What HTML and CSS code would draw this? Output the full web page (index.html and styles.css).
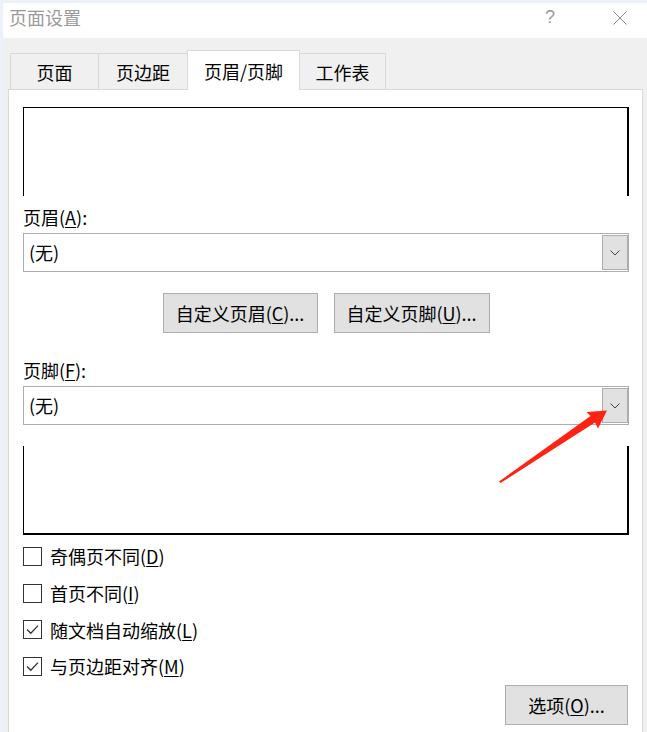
FILE: index.html
```html
<!DOCTYPE html>
<html lang="zh-CN">
<head>
<meta charset="utf-8">
<title>页面设置</title>
<link rel="stylesheet" href="styles.css">
</head>
<body>
<div class="window">
  <div class="titlebar">
    <span class="title">页面设置</span>
    <span class="help">?</span>
    <span class="close">
      <svg width="14" height="14" viewBox="0 0 14 14"><path d="M0.5 0.5L13.5 13.5M13.5 0.5L0.5 13.5" stroke="#8a8a8a" stroke-width="1" fill="none"/></svg>
    </span>
  </div>
  <div class="tabs">
    <div class="tab t1">页面</div>
    <div class="tab t2">页边距</div>
    <div class="tab t3 active">页眉/页脚</div>
    <div class="tab t4">工作表</div>
  </div>
  <div class="panel">
    <div class="preview preview-top"></div>
    <div class="label">页眉(<u>A</u>):</div>
    <div class="combo">
      <span class="combo-text">(无)</span>
      <span class="combo-btn"><svg width="10" height="6" viewBox="0 0 10 6"><path d="M0.5 0.5L5 5L9.5 0.5" stroke="#444" stroke-width="1" fill="none"/></svg></span>
    </div>
    <div class="btn-row">
      <div class="btn b1">自定义页眉(<u>C</u>)...</div>
      <div class="btn b2">自定义页脚(<u>U</u>)...</div>
    </div>
    <div class="label label2">页脚(<u>F</u>):</div>
    <div class="combo">
      <span class="combo-text">(无)</span>
      <span class="combo-btn"><svg width="10" height="6" viewBox="0 0 10 6"><path d="M0.5 0.5L5 5L9.5 0.5" stroke="#444" stroke-width="1" fill="none"/></svg></span>
    </div>
    <div class="preview preview-bottom"></div>
    <div class="checks">
      <div class="check"><span class="box"></span><span>奇偶页不同(<u>D</u>)</span></div>
      <div class="check"><span class="box"></span><span>首页不同(<u>I</u>)</span></div>
      <div class="check"><span class="box"><svg width="17" height="17" viewBox="0 0 17 17"><path d="M3 8.5L6.8 12.2L14 4.6" stroke="#333" stroke-width="1.3" fill="none"/></svg></span><span>随文档自动缩放(<u>L</u>)</span></div>
      <div class="check"><span class="box"><svg width="17" height="17" viewBox="0 0 17 17"><path d="M3 8.5L6.8 12.2L14 4.6" stroke="#333" stroke-width="1.3" fill="none"/></svg></span><span>与页边距对齐(<u>M</u>)</span></div>
    </div>
    <div class="opt-row">
      <div class="btn opt">选项(<u>O</u>)...</div>
    </div>
  </div>
</div>
<svg class="arrow" width="647" height="732" viewBox="0 0 647 732">
  <polygon points="499,481.5 590.5,416 586.5,412 607,410.5 598,428.5 595,422.5 500.5,483" fill="#ff2313"/>
</svg>
</body>
</html>
```
FILE: styles.css
```css
html, body {
  margin: 0;
  padding: 0;
}
body {
  background: #edf2f9;
  width: 647px;
  height: 732px;
  overflow: hidden;
  position: relative;
  font-family: "Noto Sans CJK SC", "Noto Sans", sans-serif;
  font-size: 18px;
  color: #000;
}
u {
  text-decoration: underline;
  text-underline-offset: 2px;
}
.window {
  margin: 3px 0 0 3px;
  width: 644px;
  height: 729px;
  background: #f0f0f0;
  overflow: hidden;
}
.titlebar {
  height: 35px;
  background: #fff;
  display: flex;
  align-items: flex-start;
  box-sizing: border-box;
  padding-top: 2px;
}
.title {
  padding-left: 6px;
  line-height: 24px;
  color: #9a9a9a;
}
.help {
  margin-left: auto;
  width: 46px;
  text-align: center;
  line-height: 24px;
  color: #9a9a9a;
  font-family: "Liberation Sans", sans-serif;
  font-size: 18px;
  margin-right: 24px;
}
.close {
  width: 46px;
  margin-right: 4px;
  display: flex;
  justify-content: center;
  padding-top: 6px;
}
.tabs {
  display: flex;
  align-items: flex-end;
  padding-left: 7px;
  height: 51px;
  box-sizing: border-box;
  position: relative;
  z-index: 1;
}
.tab {
  box-sizing: border-box;
  height: 36px;
  border: 1px solid #d9d9d9;
  border-bottom: none;
  margin-left: -1px;
  display: flex;
  align-items: center;
  justify-content: center;
  padding-top: 1px;
}
.t1 { width: 89px; margin-left: 0; }
.t2 { width: 90px; }
.t3 { width: 113px; }
.t4 { width: 87px; }
.tab.active {
  height: 40px;
  background: #fff;
  margin-bottom: -1px;
  position: relative;
  z-index: 2;
  padding-top: 0;
}
.panel {
  margin-left: 5px;
  width: 635px;
  height: 700px;
  box-sizing: border-box;
  background: #fff;
  border: 1px solid #d9d9d9;
  padding: 17px 13px 0 14px;
}
.preview {
  height: 89px;
  box-sizing: border-box;
}
.preview-top {
  border-top: 1px solid #000;
  border-left: 1px solid #000;
  border-right: 2px solid #000;
}
.preview-bottom {
  margin-top: 21px;
  border-left: 1px solid #000;
  border-right: 2px solid #000;
  border-bottom: 2px solid #000;
}
.label {
  margin-top: 9px;
  line-height: 24px;
  height: 24px;
}
.label2 {
  margin-top: 25px;
}
.combo {
  margin-top: 4px;
  height: 39px;
  box-sizing: border-box;
  border: 1px solid #adadad;
  display: flex;
  align-items: stretch;
}
.combo-text {
  flex: 1;
  padding-left: 5px;
  line-height: 37px;
}
.combo-btn {
  width: 26px;
  margin: 1px 0 1px 0;
  box-sizing: border-box;
  border: 1px solid #adadad;
  background: #e1e1e1;
  display: flex;
  align-items: center;
  justify-content: center;
}
.btn-row {
  margin-top: 21px;
  display: flex;
  justify-content: center;
  gap: 16px;
}
.btn {
  height: 40px;
  box-sizing: border-box;
  border: 1px solid #adadad;
  background: #e1e1e1;
  display: flex;
  align-items: center;
  justify-content: center;
}
.b1 { width: 155px; }
.b2 { width: 156px; }
.checks {
  margin-top: 3px;
}
.check {
  height: 36.7px;
  display: flex;
  align-items: center;
  gap: 8px;
}
.box {
  width: 19px;
  height: 19px;
  box-sizing: border-box;
  border: 1px solid #333;
  background: #fff;
  display: flex;
  align-items: center;
  justify-content: center;
}
.opt-row {
  margin-top: 0;
  display: flex;
  justify-content: flex-end;
  padding-right: 1px;
}
.opt {
  width: 123px;
}
.arrow {
  position: absolute;
  left: 0;
  top: 0;
  pointer-events: none;
}
```
